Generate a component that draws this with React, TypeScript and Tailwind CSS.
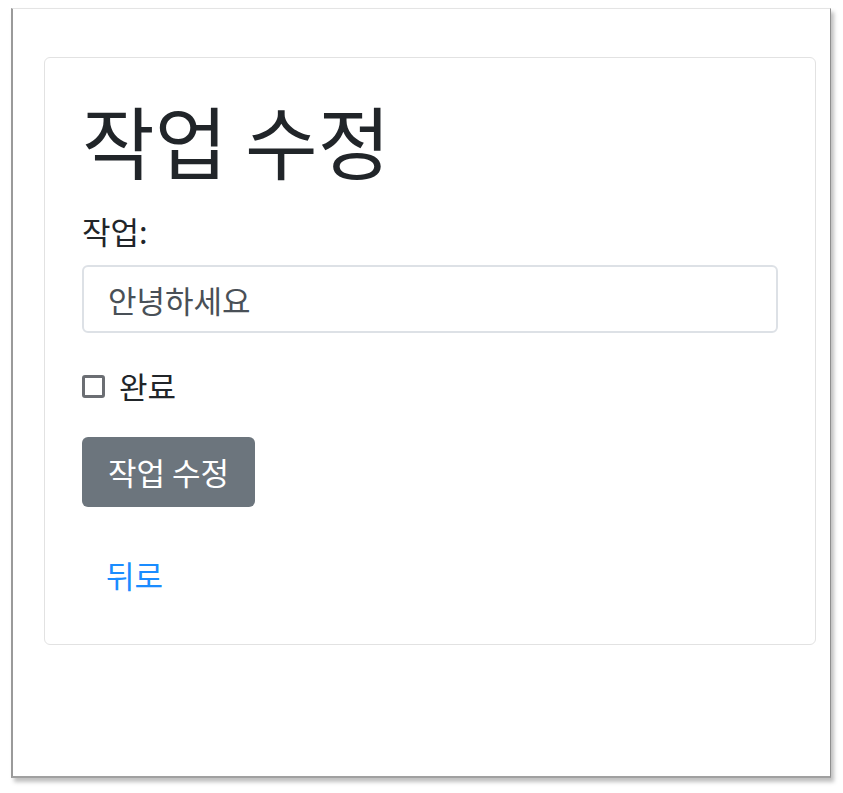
import React from 'react';

const font = { fontFamily: '"Noto Sans CJK KR", "Noto Sans", sans-serif' };

export default function App() {
  return (
    <div className="min-h-[793px] bg-white" style={font}>
      <div className="ml-[11px] pt-[8px]">
        <div className="w-[820px] h-[770px] bg-white border-l-2 border-l-[#9a9a9a] border-t border-t-[#e4e4e4] border-r border-r-[#8f8f8f] border-b-2 border-b-[#a0a0a0] shadow-[3px_4px_4px_rgba(0,0,0,0.25)] pt-[48px] pl-[31px]">
          <div className="w-[772px] border border-[#e2e2e2] rounded-[6px] px-[37px] pt-[34px] pb-[34px]">
            <h1 className="text-[79px] leading-[95px] text-[#212529] font-normal">작업 수정</h1>
            <label className="block mt-[23px] text-[31px] leading-[42px] text-[#212529]">작업:</label>
            <input
              defaultValue="안녕하세요"
              className="mt-[13px] block w-full h-[68px] px-[24px] text-[31px] text-[#495057] border-2 border-[#dde1e6] rounded-[6px] outline-none"
            />
            <div className="mt-[33px] flex items-center gap-[14px] h-[40px]">
              <span className="w-[23px] h-[23px] border-[3px] border-[#6b6e73] rounded-[3px] bg-white" />
              <span className="text-[31px] text-[#212529]">완료</span>
            </div>
            <button className="mt-[31px] block h-[70px] px-[26px] bg-[#6c757d] text-white text-[31px] rounded-[6px]">
              작업 수정
            </button>
            <button className="mt-[33px] block h-[70px] px-[24px] text-[#1a8cff] text-[31px]">뒤로</button>
          </div>
        </div>
      </div>
    </div>
  );
}
